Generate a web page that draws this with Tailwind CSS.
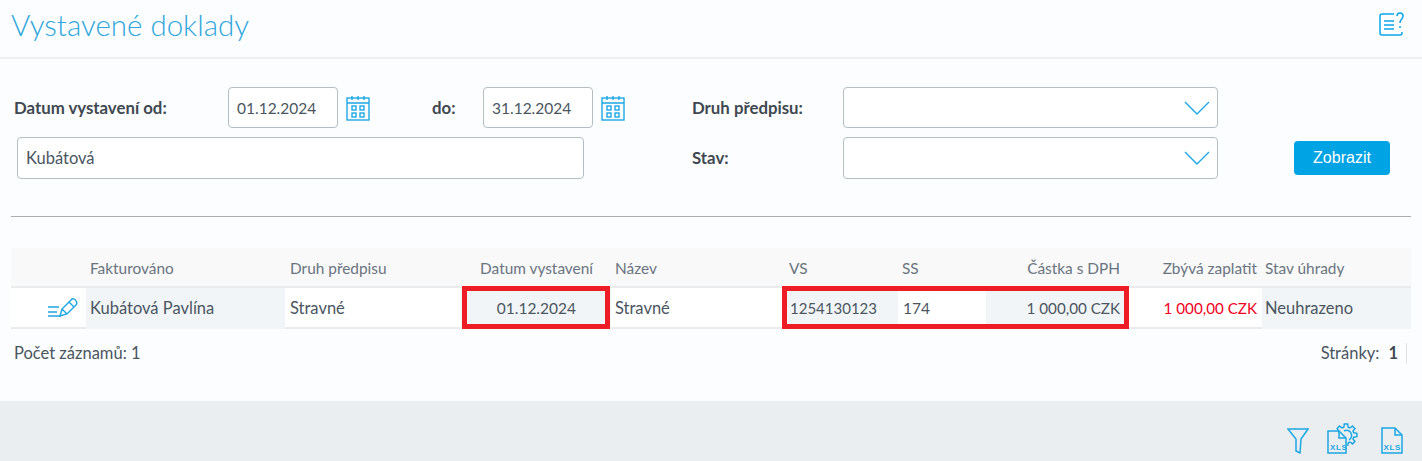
<!DOCTYPE html>
<html lang="cs">
<head>
  <meta charset="UTF-8" />
  <title>Vystavené doklady</title>
  <script src="https://cdn.jsdelivr.net/npm/@tailwindcss/browser@4"></script>
</head>
<body class="bg-[#fbfdfe] font-['Lato','Noto_Sans',sans-serif] text-[16.5px] text-[#4a5560] h-[461px] w-[1422px] overflow-hidden">

  <!-- title bar -->
  <div class="h-[59px] border-b-2 border-[#eef0f1] flex justify-between pl-[11px] pr-[17px]">
    <h1 class="text-[29.5px] leading-[50px] font-light text-[#2fa6dc]">Vystavené doklady</h1>
    <svg class="mt-[12px]" width="26" height="24" viewBox="0 0 26 24" fill="none" stroke="#0ea5e9" stroke-width="1.5">
      <path d="M15 2H3a2 2 0 0 0-2 2v17a2 2 0 0 0 2 2h18a2 2 0 0 0 2-2v-1" />
      <path d="M5 9h10M5 13h10M5 17h10" />
      <path d="M18 4c0-4 6-4 6 0 0 3-3 3-3 7M21 14v2" />
    </svg>
  </div>

  <!-- filter form -->
  <div class="mx-[11px] h-[158px] border-b border-[#a9adb0] relative">
    <div class="flex items-center pt-[28px]">
      <label class="w-[217px] pl-[3px] font-bold text-[16.8px] text-[#3f4850]">Datum vystavení od:</label>
      <div class="w-[110px] h-[41px] border border-[#b4bec6] rounded bg-white pl-[8px] leading-[40px] text-[15.5px]">01.12.2024</div>
      <svg class="ml-[8px]" width="24" height="26" viewBox="0 0 24 26" fill="none" stroke="#1ea7e4" stroke-width="1.4">
        <rect x="1" y="3" width="22" height="22" />
        <path d="M1 8h22M6 1v4M12 1v4M18 1v4" />
        <rect x="6" y="11" width="4" height="4" /><rect x="14" y="11" width="4" height="4" />
        <rect x="6" y="18" width="4" height="4" /><rect x="14" y="18" width="4" height="4" />
      </svg>
      <label class="w-[113px] pl-[62px] font-bold text-[16.8px] text-[#3f4850]">do:</label>
      <div class="w-[110px] h-[41px] border border-[#b4bec6] rounded bg-white pl-[8px] leading-[40px] text-[15.5px]">31.12.2024</div>
      <svg class="ml-[8px]" width="24" height="26" viewBox="0 0 24 26" fill="none" stroke="#1ea7e4" stroke-width="1.4">
        <rect x="1" y="3" width="22" height="22" />
        <path d="M1 8h22M6 1v4M12 1v4M18 1v4" />
        <rect x="6" y="11" width="4" height="4" /><rect x="14" y="11" width="4" height="4" />
        <rect x="6" y="18" width="4" height="4" /><rect x="14" y="18" width="4" height="4" />
      </svg>
      <label class="w-[151px] ml-[67px] font-bold text-[16.8px] text-[#3f4850] whitespace-nowrap">Druh předpisu:</label>
      <div class="w-[375px] h-[41px] border border-[#b4bec6] rounded bg-white flex items-center justify-end pr-[7px]">
        <svg width="26" height="14" viewBox="0 0 26 14" fill="none" stroke="#1ea7e4" stroke-width="1.4"><path d="M1 1l12 12L25 1" /></svg>
      </div>
    </div>
    <div class="flex items-center mt-[9px]">
      <div class="ml-[6px] w-[567px] h-[42px] border border-[#b4bec6] rounded bg-white pl-[8px] leading-[40px]">Kubátová</div>
      <label class="w-[151px] ml-[108px] font-bold text-[16.8px] text-[#3f4850]">Stav:</label>
      <div class="w-[375px] h-[42px] border border-[#b4bec6] rounded bg-white flex items-center justify-end pr-[7px]">
        <svg width="26" height="14" viewBox="0 0 26 14" fill="none" stroke="#1ea7e4" stroke-width="1.4"><path d="M1 1l12 12L25 1" /></svg>
      </div>
      <button class="ml-[76px] w-[96px] h-[34px] rounded bg-[#00a3e4] text-white text-[16px] font-['Liberation_Sans',sans-serif]">Zobrazit</button>
    </div>
  </div>

  <!-- table -->
  <div class="relative ml-[11px] w-[1400px] mt-[31px]">
    <div class="grid grid-cols-[28px_47px_199px_176px_150px_174px_113px_88px_138px_138px_149px] h-[40px] bg-[#f9f9f9] border-b-2 border-[#e9ebed] items-center pt-[3px] text-[15.4px] text-[#6a7480]">
      <div></div>
      <div></div>
      <div class="pl-[4px]">Fakturováno</div>
      <div class="pl-[5px]">Druh předpisu</div>
      <div class="text-right pr-[18px] whitespace-nowrap">Datum vystavení</div>
      <div class="pl-[4px]">Název</div>
      <div class="pl-[4px]">VS</div>
      <div class="pl-[4px]">SS</div>
      <div class="text-right pr-[4px] whitespace-nowrap">Částka s DPH</div>
      <div class="text-right pr-[5px] whitespace-nowrap">Zbývá zaplatit</div>
      <div class="pl-[3px] whitespace-nowrap">Stav úhrady</div>
    </div>
    <div class="grid grid-cols-[28px_47px_199px_176px_150px_174px_113px_88px_138px_138px_149px] h-[41px] bg-white border-b-2 border-[#e9ebed] items-stretch leading-[41px]">
      <div></div>
      <div class="flex items-center pl-[8px]">
        <svg width="31" height="21" viewBox="0 0 31 21" fill="none" stroke="#1ea7e4" stroke-width="1.4">
          <path d="M1 9h11M1 14h9M1 18h13" />
          <path d="M13 18l2-7L24 2a2.8 2.8 0 0 1 5 1 2.8 2.8 0 0 1 0 4L20 16zM15 11l5 5M22 4l5 5" />
        </svg>
      </div>
      <div class="bg-[#f2f5f8] pl-[4px]">Kubátová Pavlína</div>
      <div class="pl-[5px]">Stravné</div>
      <div class="bg-[#f2f5f8] text-right pr-[35px] text-[15.5px]">01.12.2024</div>
      <div class="pl-[4px]">Stravné</div>
      <div class="bg-[#f2f5f8] pl-[5px] text-[15px]">1254130123</div>
      <div class="pl-[5px] text-[15.5px]">174</div>
      <div class="bg-[#f2f5f8] text-right pr-[4px] whitespace-nowrap text-[15.2px]">1 000,00 CZK</div>
      <div class="text-right pr-[5px] whitespace-nowrap text-[15.2px] text-[#f0001c]">1 000,00 CZK</div>
      <div class="bg-[#f2f5f8] pl-[3px]">Neuhrazeno</div>
    </div>
    <!-- red highlight boxes from the annotated screenshot -->
    <div class="absolute left-[451px] top-[38px] w-[148px] h-[43px] border-[5px] border-[#ee1c25]"></div>
    <div class="absolute left-[771px] top-[38px] w-[347px] h-[43px] border-[5px] border-[#ee1c25]"></div>

    <div class="flex justify-between items-center h-[48px] pl-[3px]">
      <span>Počet záznamů: 1</span>
      <span class="flex items-center h-[21px] border-r border-[#dfe2e4] pr-[8px] mr-[4px]">Stránky:<b class="ml-[9px] text-[#3f4850]">1</b></span>
    </div>
  </div>

  <!-- bottom toolbar -->
  <div class="absolute left-0 top-[401px] w-[1422px] h-[60px] bg-[#ebeef0] flex justify-end items-end pb-[7px] pr-[19px]">
    <svg width="22" height="26" viewBox="0 0 22 26" fill="none" stroke="#1ea7e4" stroke-width="1.5" class="mr-[18px]">
      <path d="M1 1h20l-7 10-1 14-4-2V11z" />
    </svg>
    <svg width="32" height="31" viewBox="0 0 32 31" fill="none" stroke="#1ea7e4" stroke-width="1.5" class="mr-[22px]">
      <path d="M1 8h11l7 7v15H1z" /><path d="M12 8v7h7" />
      <path d="M12 8.1L10.1 5.5 12.5 3.1 15.1 5 16.8 4.3 17.3 1.1 20.7 1.1 21.2 4.3 22.9 5 25.5 3.1 27.9 5.5 26 8.1 26.7 9.8 29.9 10.3 29.9 13.7 26.7 14.2 26 15.9 27.9 18.5 25.5 20.9 22.9 19 21.2 19.7 20.7 22.9" />
      <path d="M17 8a5 5 0 0 1 5 9" />
      <text x="3" y="27" font-size="8" font-weight="700" letter-spacing="0.6" fill="#1ea7e4" stroke="none" font-family="Liberation Sans">XLS</text>
    </svg>
    <svg width="22" height="27" viewBox="0 0 22 27" fill="none" stroke="#1ea7e4" stroke-width="1.5">
      <path d="M1 1h13l7 7v18H1z" /><path d="M14 1v7h7" />
      <text x="2.5" y="23" font-size="8" font-weight="700" letter-spacing="0.6" fill="#1ea7e4" stroke="none" font-family="Liberation Sans">XLS</text>
    </svg>
  </div>
</body>
</html>
